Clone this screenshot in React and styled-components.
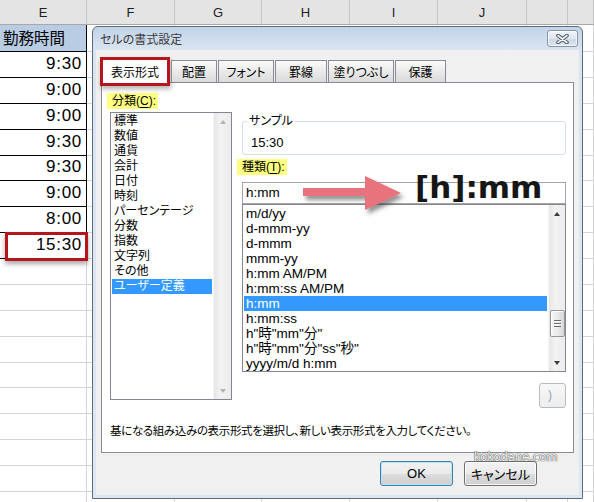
import React from 'react';
import styled, { createGlobalStyle } from 'styled-components';

const UI_FONT = `"Liberation Sans", "Noto Sans CJK JP", sans-serif`;

const GlobalStyle = createGlobalStyle`
  html, body {
    margin: 0;
    padding: 0;
  }
  body {
    width: 594px;
    height: 502px;
    overflow: hidden;
    background: #fff;
    font-family: ${UI_FONT};
  }
`;

const columns = [
  { name: 'E', w: 87 },
  { name: 'F', w: 88 },
  { name: 'G', w: 87 },
  { name: 'H', w: 88 },
  { name: 'I', w: 88 },
  { name: 'J', w: 89 },
  { name: '', w: 41 },
  { name: '', w: 26 },
];

const times = ['9:30', '9:00', '9:00', '9:30', '9:30', '9:00', '8:00', '15:30'];

// grid lines in the shot are ~25.88px apart, round each one so rows don't drift
const rowHeights = Array.from({ length: 19 }, (_, i) =>
  i === 0 ? 27 : Math.round(52 + 25.88 * i) - Math.round(52 + 25.88 * (i - 1))
);

const tabs = [
  { label: '表示形式', w: 66, active: true },
  { label: '配置', w: 46 },
  { label: 'フォント', w: 56 },
  { label: '罫線', w: 52 },
  { label: '塗りつぶし', w: 66 },
  { label: '保護', w: 51 },
];

const categories = [
  '標準', '数値', '通貨', '会計', '日付', '時刻', 'パーセンテージ',
  '分数', '指数', '文字列', 'その他', 'ユーザー定義',
];

const formats = [
  'm/d/yy', 'd-mmm-yy', 'd-mmm', 'mmm-yy', 'h:mm AM/PM', 'h:mm:ss AM/PM',
  'h:mm', 'h:mm:ss', 'h"時"mm"分"', 'h"時"mm"分"ss"秒"', 'yyyy/m/d h:mm',
];

const App = () => {
  return (
    <Page>
      <GlobalStyle />
      <Sheet>
        <Row $h={25}>
          {columns.map((c, i) => (
            <ColHead key={i} $w={c.w}>{c.name}</ColHead>
          ))}
        </Row>
        {rowHeights.map((h, r) => (
          <Row key={r} $h={h}>
            {columns.map((c, i) => {
              if (i === 0 && r === 0) {
                return <TitleCell key={i} $w={c.w}>勤務時間</TitleCell>;
              }
              if (i === 0 && r <= times.length) {
                return (
                  <TimeCell key={i} $w={c.w} $marked={r === times.length}>
                    {times[r - 1]}
                  </TimeCell>
                );
              }
              return <Cell key={i} $w={c.w} />;
            })}
          </Row>
        ))}
      </Sheet>

      <Dialog>
        <TitleBar>
          <Title>セルの書式設定</Title>
          <CloseButton>
            <svg width="13" height="10" viewBox="0 0 13 10">
              <path d="M2 1.5 L11 8.5 M11 1.5 L2 8.5" stroke="#4f5660" strokeWidth="3.6" strokeLinecap="round" />
              <path d="M2 1.5 L11 8.5 M11 1.5 L2 8.5" stroke="#f3f5f8" strokeWidth="1.6" strokeLinecap="round" />
            </svg>
          </CloseButton>
        </TitleBar>

        <Body>
          <TabRow>
            {tabs.map((t) => (
              <Tab key={t.label} $w={t.w} $active={t.active}>{t.label}</Tab>
            ))}
          </TabRow>

          <Panel>
            <Columns>
              <LeftCol>
                <Marker>分類(<u>C</u>):</Marker>
                <CategoryBox>
                  <ListItems>
                    {categories.map((c) => (
                      <ListItem key={c} $selected={c === 'ユーザー定義'}>{c}</ListItem>
                    ))}
                  </ListItems>
                  <ScrollBar $w={18}>
                    <ArrowCell><ScrollArrow $up $color="#b4b4b4" /></ArrowCell>
                    <Track />
                    <ArrowCell><ScrollArrow $color="#b4b4b4" /></ArrowCell>
                  </ScrollBar>
                </CategoryBox>
              </LeftCol>

              <RightCol>
                <Sample>
                  <SampleLegend>サンプル</SampleLegend>
                  <SampleValue>15:30</SampleValue>
                </Sample>
                <Marker $top={4}>種類(<u>T</u>):</Marker>
                <FormatInput>h:mm</FormatInput>
                <FormatBox>
                  <ListItems>
                    {formats.map((f) => (
                      <ListItem key={f} $selected={f === 'h:mm'}>{f}</ListItem>
                    ))}
                  </ListItems>
                  <ScrollBar $w={17}>
                    <ArrowCell><ScrollArrow $up $color="#3c3c3c" /></ArrowCell>
                    <Track>
                      <Thumb><Grip /></Thumb>
                    </Track>
                    <ArrowCell><ScrollArrow $color="#3c3c3c" /></ArrowCell>
                  </ScrollBar>
                </FormatBox>
                <SmallButton>)</SmallButton>
              </RightCol>
            </Columns>
            <Description>
              基になる組み込みの表示形式を選択し、新しい表示形式を入力してください。
            </Description>
          </Panel>

          <Footer>
            <Button $primary>OK</Button>
            <Button>キャンセル</Button>
          </Footer>

          <ArrowMark width="110" height="46" viewBox="0 0 110 46">
            <defs>
              <filter id="arrowShadow" x="-10%" y="-30%" width="130%" height="170%">
                <feDropShadow dx="3" dy="4" stdDeviation="2" floodColor="#3a3a3a" floodOpacity="0.55" />
              </filter>
            </defs>
            <path d="M3 16 H65 V4 L101 21 L65 38 V24 H3 Z" fill="#e9737b" filter="url(#arrowShadow)" />
          </ArrowMark>
          <BigFormat>[h]:mm</BigFormat>
          <Watermark>kokodane.com</Watermark>
        </Body>
      </Dialog>
    </Page>
  );
};

export default App;

const Page = styled.div`
  position: relative;
  width: 594px;
  height: 502px;
  overflow: hidden;
`;

const Sheet = styled.div`
  display: flex;
  flex-direction: column;
`;

const Row = styled.div`
  display: flex;
  flex: none;
  height: ${(p) => p.$h}px;
`;

const ColHead = styled.div`
  box-sizing: border-box;
  flex: none;
  width: ${(p) => p.$w}px;
  height: 100%;
  display: flex;
  align-items: center;
  justify-content: center;
  background: #e4e4e4;
  border-right: 1px solid #c4c4c4;
  border-bottom: 1px solid #a8a8a8;
  font-family: "Liberation Sans", sans-serif;
  font-size: 13px;
  color: #1e1e1e;
`;

const Cell = styled.div`
  box-sizing: border-box;
  flex: none;
  width: ${(p) => p.$w}px;
  height: 100%;
  border-right: 1px solid #d4d4d4;
  border-bottom: 1px solid #d4d4d4;
  background: #fff;
`;

const TitleCell = styled(Cell)`
  display: flex;
  align-items: center;
  padding: 0 0 3px 3px;
  background: #b8cce4;
  border-color: #000;
  font-family: "Noto Sans CJK JP", sans-serif;
  font-size: 15.5px;
  color: #000;
`;

const TimeCell = styled(Cell)`
  position: relative;
  display: flex;
  align-items: center;
  justify-content: flex-end;
  padding: 0 4px 2px 0;
  border-color: #000;
  font-family: "Liberation Sans", sans-serif;
  font-size: 17px;
  letter-spacing: 0.7px;
  color: #000;

  ${(p) =>
    p.$marked &&
    `
    &::after {
      content: '';
      position: absolute;
      left: 5px;
      right: -2px;
      top: -1px;
      bottom: -3px;
      border: 3px solid #b5161e;
      box-shadow: 0 3px 5px rgba(0, 0, 0, 0.35);
    }
  `}
`;

const Dialog = styled.div`
  position: absolute;
  left: 92px;
  top: 26px;
  box-sizing: border-box;
  width: 491px;
  height: 473px;
  padding: 0 3px 3px;
  border: 1px solid #5e6b7b;
  border-radius: 6px 6px 0 0;
  background: linear-gradient(#c2d3e8, #dae5f2 23px, #dde7f2);
  display: flex;
  flex-direction: column;
  font-family: ${UI_FONT};
  font-feature-settings: "palt";
  color: #000;
`;

const TitleBar = styled.div`
  flex: none;
  height: 23px;
  display: flex;
  align-items: center;
  justify-content: space-between;
  padding-left: 4px;
`;

const Title = styled.span`
  font-size: 12px;
  color: #3b3b3b;
`;

const CloseButton = styled.div`
  box-sizing: border-box;
  align-self: flex-start;
  width: 31px;
  height: 17px;
  margin: 3px 1px 0 0;
  border: 1px solid #8795a8;
  border-radius: 3px;
  background: linear-gradient(#f0f4f9, #dde5ef 50%, #cdd8e5 51%, #dbe4ef);
  box-shadow: inset 0 0 0 1px rgba(255, 255, 255, 0.7);
  display: flex;
  align-items: center;
  justify-content: center;
`;

const Body = styled.div`
  position: relative;
  flex: 1;
  display: flex;
  flex-direction: column;
  padding: 8px 5px 0;
  background: #f0f0f0;
`;

const TabRow = styled.div`
  position: relative;
  z-index: 1;
  flex: none;
  height: 24px;
  display: flex;
  align-items: flex-end;
  padding-left: 1px;
`;

const Tab = styled.div`
  position: relative;
  box-sizing: border-box;
  flex: none;
  width: ${(p) => p.$w}px;
  height: ${(p) => (p.$active ? 25 : 22)}px;
  margin-right: ${(p) => (p.$active ? 3 : 1)}px;
  margin-bottom: ${(p) => (p.$active ? -1 : 0)}px;
  border: 1px solid #898c95;
  border-bottom: none;
  background: ${(p) =>
    p.$active ? '#fff' : 'linear-gradient(#fbfbfb, #e8e8e8 55%, #dadada)'};
  display: flex;
  align-items: center;
  justify-content: center;
  font-size: 12px;

  ${(p) =>
    p.$active &&
    `
    &::after {
      content: '';
      position: absolute;
      left: -3px;
      right: -3px;
      top: -2px;
      bottom: -3px;
      border: 3px solid #b5161e;
      box-shadow: 1px 3px 5px rgba(0, 0, 0, 0.3);
    }
  `}
`;

const Panel = styled.div`
  box-sizing: border-box;
  flex: none;
  height: 371px;
  border: 1px solid #898c95;
  background: #fff;
  display: flex;
  flex-direction: column;
`;

const Columns = styled.div`
  display: flex;
  padding: 10px 0 0 5px;
`;

const LeftCol = styled.div`
  width: 125px;
  display: flex;
  flex-direction: column;
  align-items: flex-start;
`;

const RightCol = styled.div`
  width: 329px;
  margin-left: 5px;
  display: flex;
  flex-direction: column;
  align-items: flex-start;
  padding-top: 20px;
`;

const Marker = styled.div`
  height: 16px;
  margin-top: ${(p) => p.$top || 0}px;
  padding: 0 2px 0 5px;
  line-height: 16px;
  background: #ffff80;
  font-size: 12px;
  white-space: nowrap;

  u {
    text-underline-offset: 2px;
  }
`;

const CategoryBox = styled.div`
  box-sizing: border-box;
  width: 122px;
  height: 288px;
  margin: 3px 0 0 3px;
  border: 1px solid #828790;
  display: flex;
  font-size: 12px;
`;

const FormatBox = styled.div`
  box-sizing: border-box;
  width: 324px;
  height: 168px;
  margin-left: 5px;
  border: 1px solid #828790;
  display: flex;
  font-size: 13.5px;
`;

const ListItems = styled.div`
  flex: 1;
  min-width: 0;
  padding: 1px 1px 0;
  overflow: hidden;
`;

const ListItem = styled.div`
  height: 15px;
  line-height: 15px;
  padding-left: 2px;
  white-space: nowrap;
  background: ${(p) => (p.$selected ? '#3399ff' : 'transparent')};
  color: ${(p) => (p.$selected ? '#fff' : '#000')};
`;

const ScrollBar = styled.div`
  box-sizing: border-box;
  flex: none;
  width: ${(p) => p.$w}px;
  display: flex;
  flex-direction: column;
  background: linear-gradient(90deg, #e6e6e6, #f2f2f2 40%, #ececec);
  border-left: 1px solid #f7f7f7;
`;

const ArrowCell = styled.div`
  flex: none;
  height: 17px;
  display: flex;
  align-items: center;
  justify-content: center;
`;

const ScrollArrow = styled.span`
  width: 0;
  height: 0;
  border-left: 3.5px solid transparent;
  border-right: 3.5px solid transparent;
  ${(p) =>
    p.$up
      ? `border-bottom: 4px solid ${p.$color};`
      : `border-top: 4px solid ${p.$color};`}
`;

const Track = styled.div`
  flex: 1;
  display: flex;
  flex-direction: column;
  align-items: center;
`;

const Thumb = styled.div`
  box-sizing: border-box;
  width: 15px;
  height: 27px;
  margin-top: 88px;
  border: 1px solid #979797;
  border-radius: 2px;
  background: linear-gradient(90deg, #f6f6f6, #e9e9e9 50%, #d8d8d8);
  box-shadow: inset 1px 1px 0 #fff;
  display: flex;
  align-items: center;
  justify-content: center;
`;

const Grip = styled.span`
  width: 7px;
  height: 7px;
  background: repeating-linear-gradient(#6e6e6e 0 1px, #fdfdfd 1px 2px, transparent 2px 3px);
`;

const Sample = styled.fieldset`
  box-sizing: border-box;
  width: 324px;
  min-width: 0;
  margin: 0 0 0 5px;
  padding: 0 0 3px 8px;
  border: 1px solid #d5dfe5;
  border-radius: 3px;
`;

const SampleLegend = styled.legend`
  margin-left: -4px;
  padding: 0 2px;
  font-size: 12px;
  line-height: 16px;
`;

const SampleValue = styled.div`
  padding-top: 6px;
  line-height: 16px;
  font-size: 13px;
`;

const FormatInput = styled.div`
  box-sizing: border-box;
  width: 324px;
  height: 22px;
  margin: 7px 0 0 5px;
  padding-left: 3px;
  border: 1px solid #a2a4a8;
  line-height: 20px;
  font-size: 13.5px;
`;

const SmallButton = styled.div`
  box-sizing: border-box;
  align-self: flex-end;
  width: 27px;
  height: 25px;
  margin-top: 11px;
  padding-left: 8px;
  border: 1px solid #b7bbbf;
  border-radius: 3px;
  background: linear-gradient(#f7f7f7, #ededed);
  line-height: 23px;
  font-size: 12px;
  color: #8ea3c2;
`;

const Description = styled.div`
  margin-top: auto;
  padding: 0 0 13px 8px;
  line-height: 16px;
  font-size: 11.5px;
  letter-spacing: -0.35px;
  white-space: nowrap;
`;

const Footer = styled.div`
  box-sizing: border-box;
  flex: none;
  height: 42px;
  display: flex;
  justify-content: flex-end;
  gap: 11px;
  padding: 8px 37px 0 0;
`;

const Button = styled.div`
  box-sizing: border-box;
  width: 73px;
  height: 25px;
  border: 1px solid ${(p) => (p.$primary ? '#3c7fb1' : '#707070')};
  border-radius: 3px;
  background: linear-gradient(#f2f2f2, #ebebeb 50%, #dddddd 51%, #cfcfcf);
  box-shadow: inset 0 0 0 1px ${(p) => (p.$primary ? '#b9e3f9' : 'rgba(255,255,255,0.8)')};
  display: flex;
  align-items: center;
  justify-content: center;
  font-size: 13px;
`;

const ArrowMark = styled.svg`
  position: absolute;
  left: 204px;
  top: 122px;
  overflow: visible;
  pointer-events: none;
`;

const BigFormat = styled.div`
  position: absolute;
  left: 319px;
  top: 122px;
  font-family: "DejaVu Sans", sans-serif;
  font-weight: bold;
  font-size: 31px;
  line-height: 31px;
  color: #161616;
  white-space: nowrap;
`;

const Watermark = styled.div`
  position: absolute;
  left: 378px;
  top: 402px;
  font-family: "DejaVu Sans", sans-serif;
  font-size: 11.5px;
  line-height: 11px;
  color: #fbfbfb;
  text-shadow: 0 0 1px #555, 0 0 1px #555, 0 0 1px #555;
  white-space: nowrap;
`;
